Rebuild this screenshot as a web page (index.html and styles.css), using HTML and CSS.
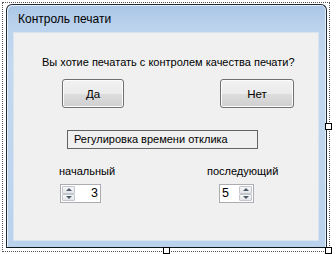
FILE: index.html
```html
<!DOCTYPE html>
<html lang="ru">
<head>
<meta charset="utf-8">
<title>Контроль печати</title>
<link rel="stylesheet" href="styles.css">
</head>
<body>
<div class="stage">
  <div class="selection"></div>
  <div class="window">
    <div class="titlebar">Контроль печати</div>
    <div class="client">
      <p class="question">Вы хотие печатать с контролем качества печати?</p>
      <div class="buttons">
        <button class="btn btn-yes">Да</button>
        <button class="btn btn-no">Нет</button>
      </div>
      <div class="caption-box">Регулировка времени отклика</div>
      <div class="spinners">
        <div class="col col-start">
          <div class="lbl">начальный</div>
          <div class="spin spin-left">
            <div class="spin-btns">
              <span class="spin-btn"><span class="tri-up"></span></span>
              <span class="spin-btn"><span class="tri-down"></span></span>
            </div>
            <span class="spin-val val-right">3</span>
          </div>
        </div>
        <div class="col col-next">
          <div class="lbl">последующий</div>
          <div class="spin spin-right">
            <span class="spin-val">5</span>
            <div class="spin-btns">
              <span class="spin-btn"><span class="tri-up"></span></span>
              <span class="spin-btn"><span class="tri-down"></span></span>
            </div>
          </div>
        </div>
      </div>
    </div>
  </div>
  <span class="handle h-right"></span>
  <span class="handle h-bottom"></span>
  <span class="handle h-corner"></span>
</div>
</body>
</html>
```
FILE: styles.css
```css
html, body {
  margin: 0;
  padding: 0;
  background: #ffffff;
}
body {
  font-family: "Liberation Sans", Arial, sans-serif;
  font-size: 11px;
  color: #000;
}
.stage {
  position: relative;
  width: 336px;
  height: 254px;
  overflow: hidden;
  padding: 4px 0 0 6px;
  box-sizing: border-box;
}
.selection {
  position: absolute;
  left: 2px;
  top: 2px;
  width: 328px;
  height: 250px;
  box-sizing: border-box;
  border: 1px dotted #555;
}
.window {
  position: relative;
  width: 321px;
  height: 244px;
  box-sizing: border-box;
  border: 1px solid #1e2a36;
  border-bottom-color: #0c141c;
  border-radius: 6px 6px 0 0;
  background: linear-gradient(to bottom, #aac5e6 0px, #bcd3ed 22px, #c4d9ef 60px, #bad2ec 100%);
  display: flex;
  flex-direction: column;
  box-shadow: inset 1px 1px 0 #e6eef8, inset -1px 0 0 #e6eef8;
}
.titlebar {
  height: 27px;
  line-height: 28px;
  padding-left: 11px;
  font-family: "Liberation Sans", Arial, sans-serif;
  font-size: 12px;
  color: #000;
}
.client {
  flex: 1;
  margin: 0 7px 6px 6px;
  background: #f0f0f0;
  border: 1px solid #d9e4f1;
  box-sizing: border-box;
}
.question {
  margin: 22px 0 0 28px;
  line-height: 14px;
  white-space: nowrap;
}
.buttons {
  display: flex;
  margin-top: 10px;
  padding-left: 48px;
  gap: 96px;
}
.btn {
  height: 29px;
  box-sizing: border-box;
  border: 1px solid #707070;
  border-radius: 3px;
  background: linear-gradient(to bottom, #f2f2f2 0%, #ebebeb 50%, #dddddd 51%, #cfcfcf 100%);
  box-shadow: inset 0 0 0 1px #fcfcfc;
  font-family: "Liberation Sans", Arial, sans-serif;
  font-size: 11.5px;
  color: #000;
  padding: 0;
}
.btn-yes { width: 62px; }
.btn-no { width: 74px; }
.caption-box {
  margin: 22px 0 0 53px;
  width: 191px;
  height: 19px;
  box-sizing: border-box;
  border: 1px solid #646464;
  padding-left: 6px;
  line-height: 17px;
  white-space: nowrap;
}
.spinners {
  display: flex;
  margin-top: 15px;
  padding-left: 45px;
}
.col {
  display: flex;
  flex-direction: column;
}
.col-start { width: 148px; }
.col-next { align-items: flex-start; }
.lbl {
  line-height: 14px;
  white-space: nowrap;
}
.spin {
  display: flex;
  margin-top: 6px;
  height: 19px;
  box-sizing: border-box;
  border: 1px solid #abadb3;
  background: #fff;
}
.spin-left { width: 41px; margin-left: 1px; }
.spin-right { width: 35px; margin-left: 12px; }
.spin-btns {
  display: flex;
  flex-direction: column;
  width: 13px;
  padding: 1px 0;
  box-sizing: border-box;
}
.spin-left .spin-btns { margin-left: 1px; }
.spin-right .spin-btns { margin-right: 1px; margin-left: auto; }
.spin-btn {
  flex: 1;
  display: flex;
  align-items: center;
  justify-content: center;
  border: 1px solid #c3c7cd;
  border-radius: 1px;
  background: linear-gradient(to bottom, #f7f7f7, #e3e5e8);
}
.tri-up, .tri-down {
  width: 0;
  height: 0;
  border-left: 3px solid transparent;
  border-right: 3px solid transparent;
}
.tri-up { border-bottom: 3px solid #4d5a6a; }
.tri-down { border-top: 3px solid #4d5a6a; }
.spin-val {
  font-size: 12.5px;
  line-height: 17px;
  padding: 0 2px;
}
.val-right {
  flex: 1;
  text-align: right;
}
.handle {
  position: absolute;
  width: 7px;
  height: 7px;
  box-sizing: border-box;
  border: 1px solid #000;
  background: #fff;
}
.h-right { left: 325px; top: 123px; }
.h-bottom { left: 163px; top: 247px; }
.h-corner { left: 325px; top: 247px; }
```
